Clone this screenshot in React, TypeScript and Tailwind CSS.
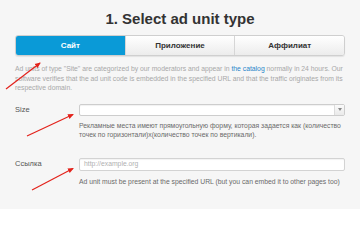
import React from "react";

export default function App() {
  const font = { fontFamily: '"Liberation Sans", Arial, sans-serif' };
  return (
    <div
      className="relative w-[360px] h-[209px] overflow-hidden bg-[#f6f6f6] px-[15px]"
      style={font}
    >
      <h1 className="pt-[10px] text-center text-[15px] leading-[18px] font-bold text-[#333]">
        1. Select ad unit type
      </h1>

      <div className="mt-[7px] flex h-[21px] rounded-[3px] border border-[#cfcfcf] shadow-[0_1px_1px_rgba(0,0,0,0.08)]">
        <div className="flex flex-1 items-center justify-center rounded-l-[2px] bg-[#0a9ad7] text-[8px] font-bold text-white">
          Сайт
        </div>
        <div className="flex flex-1 items-center justify-center border-l border-[#d6d6d6] bg-gradient-to-b from-white to-[#ececec] text-[8px] font-bold text-[#333]">
          Приложение
        </div>
        <div className="flex flex-1 items-center justify-center rounded-r-[2px] border-l border-[#d6d6d6] bg-gradient-to-b from-white to-[#ececec] text-[8px] font-bold text-[#333]">
          Аффилиат
        </div>
      </div>

      <p className="mt-[8px] text-[6.8px] leading-[9.5px] text-[#a8a8a8]">
        Ad units of type "Site" are categorized by our moderators and appear in{" "}
        <span className="text-[#2a86c9]">the catalog</span> normally in 24 hours. Our
        software verifies that the ad unit code is embedded in the specified URL and that
        the traffic originates from its respective domain.
      </p>

      <div className="mt-[11px] grid grid-cols-[64px_1fr]">
        <div className="flex h-[12px] items-center text-[7.5px] text-[#555]">Size</div>
        <div>
          <div className="flex h-[12px] rounded-[2px] border border-[#cdcdcd] bg-white shadow-[inset_0_1px_1px_rgba(0,0,0,0.06)]">
            <div className="flex-1" />
            <div className="flex w-[10px] items-center justify-center border-l border-[#dcdcdc] bg-gradient-to-b from-[#fafafa] to-[#eaeaea]">
              <svg width="4" height="3" viewBox="0 0 4 3">
                <path d="M0 0 L4 0 L2 3 Z" fill="#888" />
              </svg>
            </div>
          </div>
          <p className="mt-[5px] text-[6.8px] leading-[9.5px] text-[#6a6a6a]">
            Рекламные места имеют прямоугольную форму, которая задается как (количество
            точек по горизонтали)x(количество точек по вертикали).
          </p>
        </div>
      </div>

      <div className="mt-[18px] grid grid-cols-[64px_1fr]">
        <div className="flex h-[13px] items-center text-[7.5px] text-[#555]">Ссылка</div>
        <div>
          <div className="flex h-[13px] items-center rounded-[2px] border border-[#d3d3d3] bg-white px-[4px] text-[6.8px] text-[#b0b0b0] shadow-[inset_0_1px_1px_rgba(0,0,0,0.05)]">
            http://example.org
          </div>
          <p className="mt-[6px] text-[6.8px] leading-[9.5px] text-[#6a6a6a]">
            Ad unit must be present at the specified URL (but you can embed it to other pages too)
          </p>
        </div>
      </div>

      <svg
        className="pointer-events-none absolute left-0 top-0"
        width="360"
        height="209"
        viewBox="0 0 360 209"
      >
        <defs>
          <marker
            id="ah"
            markerWidth="6"
            markerHeight="6"
            refX="5"
            refY="3"
            orient="auto"
            markerUnits="userSpaceOnUse"
          >
            <path d="M0 0.5 L6 3 L0 5.5 Z" fill="#e3221b" />
          </marker>
        </defs>
        <line x1="6" y1="89" x2="40" y2="63" stroke="#e3221b" strokeWidth="1.2" markerEnd="url(#ah)" />
        <line x1="27" y1="136" x2="73" y2="114.5" stroke="#e3221b" strokeWidth="1.2" markerEnd="url(#ah)" />
        <line x1="32" y1="190" x2="73" y2="168.5" stroke="#e3221b" strokeWidth="1.2" markerEnd="url(#ah)" />
      </svg>
    </div>
  );
}
